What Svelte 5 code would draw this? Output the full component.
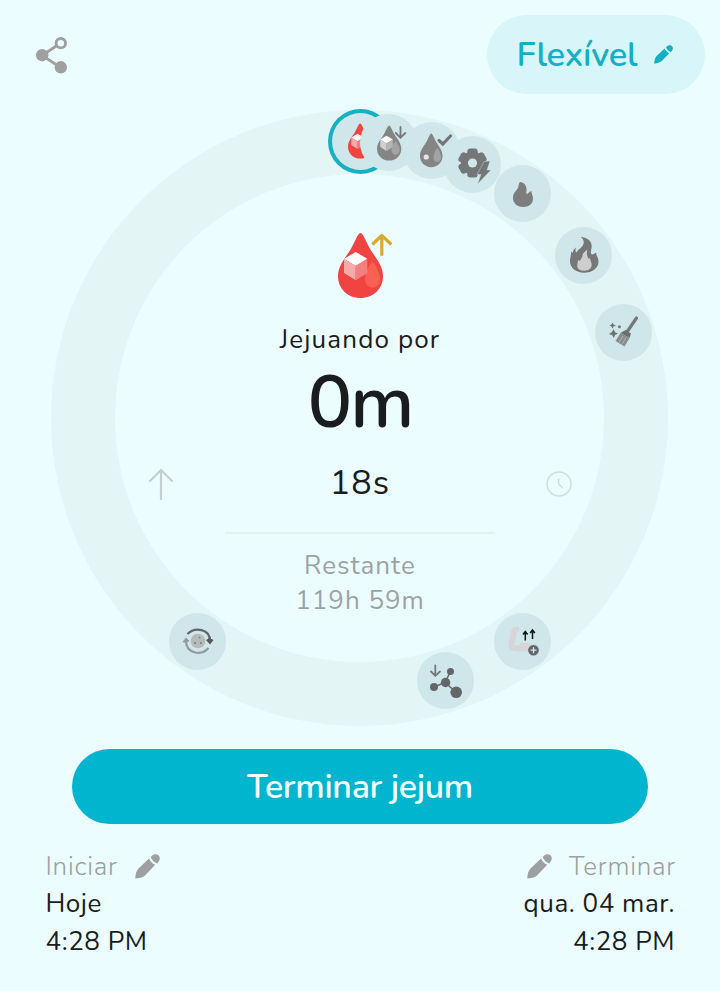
<script>
  const goal = 120
  const radius = 276.5

  // where each fasting stage begins, in hours
  const stages = [
    { icon: 'sugar-up', hour: 0 },
    { icon: 'sugar-down', hour: 2 },
    { icon: 'sugar-ok', hour: 5 },
    { icon: 'gear', hour: 8 },
    { icon: 'ember', hour: 12 },
    { icon: 'flame', hour: 18 },
    { icon: 'broom', hour: 24 },
    { icon: 'muscle', hour: 48 },
    { icon: 'molecule', hour: 54 },
    { icon: 'renew', hour: 72 }
  ]

  const place = function (hour) {
    let a = (hour / goal) * Math.PI * 2
    let x = 309 + Math.sin(a) * radius
    let y = 308 - Math.cos(a) * radius
    return `left:${x.toFixed(1)}px; top:${y.toFixed(1)}px`
  }
</script>

{#snippet pencil(size)}
  <svg class="pencil" width={size} height={size} viewBox="0 0 25 25">
    <path d="M.3 24.6C.5 20.500 1.200 17 3.500 14.600L14 4.500c1.200 2.900 3.200 5 6.200 6.300L10.200 21.200C7.600 23.400 4.200 24.400.3 24.600z" />
    <path d="M15.800 2.900C17.400.9 19.200 0 21 .3c2.200.3 3.600 1.800 3.800 3.700.1 1.900-.9 3.700-2.700 5.400-3-1.300-5.200-3.500-6.300-6.500z" />
  </svg>
{/snippet}

{#snippet drop()}
  <path class="body" d="M22.5 0C25 0 27 7 33 17.500C39 26 45 34 45 43C45 56 35 65 22.500 65C10 65 0 56 0 43C0 34 6 26 12 17.500C18 7 20 0 22.500 0z" />
  <path class="shine" d="M34.500 29C36 29 42 39 42 45.500C42 51 39 54.500 34.500 54.500C30 54.500 27 51 27 45.500C27 39 33 29 34.500 29z" />
{/snippet}

{#snippet cube()}
  <path fill="#fff" d="M17.700 19L29.300 25.700L17.700 33L6 25.700z" />
  <path class="left" d="M6 25.700L17.700 33V47.300L6 40z" />
  <path class="right" d="M29.300 25.700L17.700 33V47.300L29.300 40z" />
{/snippet}

<main>
  <header>
    <svg class="share" width="32" height="38" viewBox="36 36 32 38">
      <path d="M60 43.500L42 55.500L60.700 67.500" fill="none" stroke="#a0a0a0" stroke-width="2.800" />
      <circle cx="42.200" cy="55.200" r="6.200" fill="#a0a0a0" />
      <circle cx="60.800" cy="67.300" r="6.200" fill="#a0a0a0" />
      <circle cx="60.800" cy="43.200" r="4.700" fill="#ebfdff" stroke="#a0a0a0" stroke-width="2.900" />
    </svg>
    <button class="plan"><span>Flexível</span>{@render pencil(19)}</button>
  </header>

  <section class="dial">
    {#each stages as stage}
      <div class="badge" class:current={stage.hour === 0} style={place(stage.hour)}>
        <svg width="60" height="60" viewBox="-30 -30 60 60">
          {#if stage.icon === 'sugar-up'}
            <g class="red" transform="translate(-12 -17.500) scale(.54)">{@render drop()}{@render cube()}</g>
          {:else if stage.icon === 'sugar-down'}
            <g class="grey" transform="translate(-12 -17.500) scale(.54)">{@render drop()}{@render cube()}</g>
            <path class="line" d="M11.500 -16V-5.500M6.800 -10L11.500 -5.200L16.200 -10" />
          {:else if stage.icon === 'sugar-ok'}
            <g class="grey" transform="translate(-12 -16.500) scale(.5 .52)">{@render drop()}</g>
            <circle cx="-5.800" cy="7" r="2.600" fill="#e6e6e6" />
            <path class="line thick" d="M7 -9.500L10.800 -6L18.500 -14" />
          {:else if stage.icon === 'gear'}
            <g fill="#757678">
              {#each [0, 60, 120, 180, 240, 300] as turn}
                <rect x="-5.200" y="-14.500" width="10.400" height="13" rx="3" transform="translate(-.5 -2) rotate({turn})" />
              {/each}
              <circle cx="-.5" cy="-2" r="11.500" />
              <path d="M11 -3.500L17 -4L14 5H18L4.500 19L8 9.500H4z" stroke="#cfe6eb" stroke-width=".4" />
            </g>
            <circle cx="-.5" cy="-2" r="4.600" fill="#cfe6eb" />
          {:else if stage.icon === 'ember'}
            <path fill="#7d7d7d" d="M-3 -12C1 -12 4 -8 3.500 -4C3.300 -1 3 0 4 0C5 -.5 6 -2 8.500 -3C8 -1 10 1 10 4.500C10 10 6 13 0 13C-6 13 -10 9 -10 4C-10 -1 -7 -3 -5 -6C-4 -8 -5 -10 -3 -12z" />
          {:else if stage.icon === 'flame'}
            <path fill="#777" d="M-3.300 -18.300C3 -17.500 7.700 -14 7.700 -9C7.700 -6 6 -3 7.300 -1C8.500 .5 10.500 -2 12.300 -2.300C11.500 0 14.500 2 14.500 6.500C14.500 13.500 8 17.700 0 17.700C-8 17.700 -14 13 -14 6C-14 2 -12.500 0 -13 -3.500L-11 -2C-11.500 -4 -10 -6 -8 -7.500C-9 -5 -8.500 -3 -7.500 -2.500C-6 -6 -1.700 -7 -.5 -11C.3 -14 -1 -16.500 -3.300 -18.300z" />
            <path fill="#cecece" d="M3.300 -5.300C2.500 -2 3 0 4 3C4.500 4 5 4 6 3C6 5 7.700 7 7.700 10C7.500 14 4 15.700 .5 15.700C-3 15.700 -6.700 14.500 -6.700 11C-6.700 8 -6 7 -6 5L-4 6C-3 3 -1 2 -1.500 -1C0 -2 1 -4 3.300 -5.300z" />
          {:else if stage.icon === 'broom'}
            <path d="M13.500 -14L4 0" stroke="#77787a" stroke-width="3.200" stroke-linecap="round" />
            <path fill="#6e6e70" d="M2.500 -2L8 1.500L6.500 6L-2.500 1z" />
            <path fill="#8b8b8d" d="M-2.500 1L6.500 6L1.500 14.500L-7.500 9z" />
            <path stroke="#b4b9bb" stroke-width=".8" d="M0 4L-4 10.500M3 5.500L-1 12.500" />
            <path fill="#6f7173" d="M-9.500 -3L-8 .2L-5 1.500L-8 3L-9 6L-11 3L-14 2L-11 0zM-10.500 -9.500L-9.500 -7.500L-7 -6.500L-9.500 -5.500L-10.500 -3.500L-11.500 -5.500L-13.500 -6.500L-11.500 -7.500z" />
            <circle cx="-3.600" cy="-5.200" r="1.500" fill="#77787a" />
          {:else if stage.icon === 'muscle'}
            <path d="M-6.500 -11.500C-9.500 -11.500 -9.500 -6 -10.500 -2C-12 3 -12.500 7 -9 7C-4 7.500 1 8.500 12 6" fill="none" stroke="#d6d6d8" stroke-width="6" stroke-linecap="round" stroke-linejoin="round" />
            <ellipse cx="2" cy="5" rx="6" ry="3.500" fill="#d6d6d8" />
            <path d="M2.300 -.5V-9M0 -6.500L2.300 -9.500L4.600 -6.500M9.500 -2V-11M7.200 -8L9.500 -11L11.800 -8" fill="none" stroke="#111719" stroke-width="1.500" />
            <circle cx="10.500" cy="9.200" r="5.300" fill="#626668" />
            <path d="M7.500 9.200H13.500M10.500 6.200V12.200" stroke="#d7e8eb" stroke-width="1.300" />
          {:else if stage.icon === 'molecule'}
            <path d="M-11 6L0 1.500L5.500 -9.500M0 1.500L11 11" fill="none" stroke="#626668" stroke-width="1.500" />
            <g fill="#626668">
              <circle cx="-11" cy="6" r="4" />
              <circle cx=".6" cy="1.500" r="4.700" />
              <circle cx="5.500" cy="-9.500" r="3.500" />
              <circle cx="11.200" cy="11.300" r="5.800" />
            </g>
            <path class="line" d="M-9.700 -15.500V-6M-14 -9.500L-9.700 -5.200L-5 -9.500" />
          {:else}
            <path d="M-10.500 -7C-3 -14.500 12 -12 12 0" fill="none" stroke="#626668" stroke-width="2.400" />
            <path d="M8 -1L11.500 -3L15.500 -1L12 3.500z" fill="#55595b" />
            <path d="M10.500 7C3 15.500 -12 12 -12 0" fill="none" stroke="#91999c" stroke-width="2.200" />
            <path d="M-15.500 1L-12 -3.500L-8.500 0L-12 2z" fill="#91999c" />
            <circle r="7.300" fill="#b8b9ba" />
            <g fill="#777">
              <circle cx="1.500" cy="-3.500" r=".8" />
              <circle cx="-3" cy="2" r=".9" />
              <circle cx="3" cy="2" r=".9" />
            </g>
          {/if}
        </svg>
      </div>
    {/each}

    <div class="status">
      <svg class="stage" width="56" height="66" viewBox="0 0 56 66">
        <g class="red">{@render drop()}{@render cube()}</g>
        <path d="M43.800 21.500V3.500M35.300 10.500L43.800 2.500L52.300 10.500" fill="none" stroke="#d9a92b" stroke-width="3.200" stroke-linecap="round" stroke-linejoin="round" />
      </svg>
      <div class="label">Jejuando por</div>
      <div class="minutes">0m</div>
      <div class="seconds">
        <svg width="26" height="32" viewBox="0 0 26 32">
          <path d="M13 31V2M2 13L13 2L24 13" fill="none" stroke="#c4cfd1" stroke-width="2.200" stroke-linecap="round" stroke-linejoin="round" />
        </svg>
        <span>18s</span>
        <svg width="26" height="26" viewBox="0 0 26 26">
          <g fill="none" stroke="#cfdee1" stroke-width="1.500" stroke-linecap="round">
            <circle cx="13" cy="13" r="12" />
            <path d="M12.600 8V13L16.200 16.500" />
          </g>
        </svg>
      </div>
      <hr />
      <div class="left-over">Restante</div>
      <div class="left-over">119h 59m</div>
    </div>
  </section>

  <button class="finish"><span>Terminar jejum</span></button>

  <footer>
    <div>
      <div class="caption"><span>Iniciar</span>{@render pencil(25)}</div>
      <div>Hoje</div>
      <div>4:28 PM</div>
    </div>
    <div class="end">
      <div class="caption">{@render pencil(25)}<span>Terminar</span></div>
      <div>qua. 04 mar.</div>
      <div>4:28 PM</div>
    </div>
  </footer>
</main>

<style>
  :global(body) {
    background: #ebfdff;
  }
  main {
    width: 720px;
    height: 991px;
    overflow: hidden;
    box-sizing: border-box;
    font-family: Nunito, Lato, sans-serif;
    color: #1b1c20;
    background: #ebfdff;
  }
  header {
    height: 109.5px;
    box-sizing: border-box;
    padding: 15px 15px 0 36px;
    display: flex;
    justify-content: space-between;
    align-items: flex-start;
  }
  .share {
    margin-top: 21px;
  }
  button {
    border: 0;
    padding: 0;
    font-family: inherit;
    display: flex;
    align-items: center;
    white-space: nowrap;
  }
  .plan {
    width: 218.5px;
    height: 78.5px;
    box-sizing: border-box;
    padding: 0 32px 0 30px;
    justify-content: space-between;
    border-radius: 40px;
    background: #d8f5fa;
    color: #12b0c4;
    font-size: 34.5px;
    letter-spacing: -.2px;
    font-weight: 600;
  }
  .pencil {
    fill: currentColor;
    flex: none;
  }
  .dial {
    position: relative;
    width: 617px;
    height: 616px;
    margin-left: 51px;
    box-sizing: border-box;
    border: 64px solid #e3f5f5;
    border-radius: 50%;
  }
  .badge {
    position: absolute;
    width: 57px;
    height: 57px;
    margin: -92.5px 0 0 -92.5px;
    display: flex;
    align-items: center;
    justify-content: center;
    border-radius: 50%;
    background: #cfe6eb;
  }
  .badge svg {
    flex: none;
  }
  .current {
    box-shadow: 0 0 0 4px #17afc2;
  }
  .red .body { fill: #ef4441; }
  .red .shine { fill: #fa6152; }
  .red .left { fill: #f8aaab; }
  .red .right { fill: #f28081; }
  .grey .body { fill: #858585; }
  .grey .shine { fill: #a3a3a3; }
  .grey .left { fill: #d0d0d0; }
  .grey .right { fill: #b5b5b5; }
  .line {
    fill: none;
    stroke: #737779;
    stroke-width: 1.8;
    stroke-linecap: round;
  }
  .thick {
    stroke-width: 3.2;
  }
  .status {
    display: flex;
    flex-direction: column;
    align-items: center;
    padding: 59px 0 0 1px;
    white-space: nowrap;
  }
  .stage {
    margin-left: 11px;
  }
  .label {
    margin-top: 23.5px;
    font-size: 26px;
    line-height: 36px;
    letter-spacing: 1.15px;
    font-weight: 370;
  }
  .minutes {
    margin-top: 5px;
    font-size: 74px;
    line-height: 80px;
    font-weight: 650;
    letter-spacing: -2px;
  }
  .seconds {
    width: 424px;
    height: 44px;
    margin-top: 19px;
    display: flex;
    align-items: center;
    justify-content: space-between;
    font-size: 34px;
    font-weight: 370;
    letter-spacing: 1.1px;
  }
  .seconds span {
    padding-bottom: 2px;
  }
  hr {
    width: 270px;
    height: 2px;
    margin: 25.5px 0 14px;
    border: 0;
    background: #e1f3f5;
  }
  .left-over {
    font-size: 26px;
    line-height: 35px;
    letter-spacing: 1px;
    font-weight: 370;
    color: #9da3a5;
  }
  .finish {
    width: 576px;
    height: 75px;
    margin: 23.5px auto 0;
    justify-content: center;
    border-radius: 38px;
    background: #02b5cf;
    color: #f3feff;
    font-size: 34px;
    letter-spacing: -.3px;
    font-weight: 600;
  }
  footer {
    display: flex;
    justify-content: space-between;
    margin-top: 23.5px;
    padding: 0 45px 0 45.5px;
    font-size: 26px;
    line-height: 37.5px;
    letter-spacing: .55px;
    font-weight: 370;
  }
  .caption {
    display: flex;
    align-items: center;
    gap: 17.5px;
    color: #9e9fa0;
    font-weight: 350;
    letter-spacing: .75px;
  }
  .end {
    text-align: right;
  }
  .end .caption {
    justify-content: flex-end;
    margin-right: -1px;
  }
</style>
